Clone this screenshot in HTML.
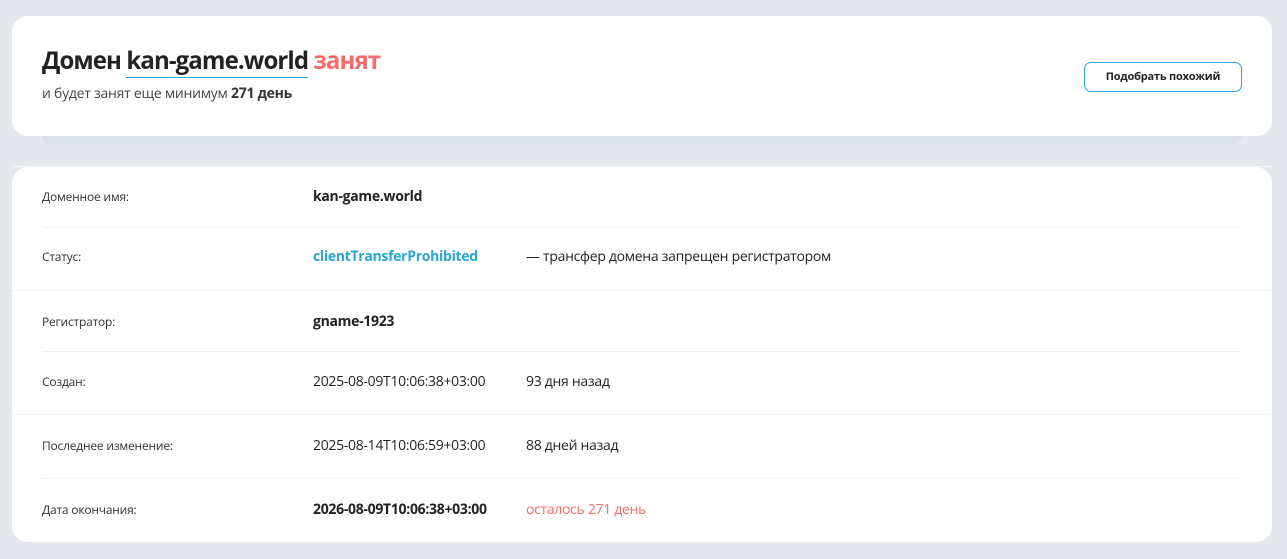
<!DOCTYPE html>
<html><head><meta charset="utf-8"><style>
*{margin:0;padding:0;box-sizing:border-box}
body{width:1287px;height:559px;background:#e5e9ed;font-family:"Open Sans","Liberation Sans","DejaVu Sans",sans-serif;color:#222;position:relative;overflow:hidden}
.card1{position:absolute;left:12px;top:16px;width:1260px;height:120px;background:#fff;border-radius:16px}
.strip{position:absolute;left:42px;top:130px;width:1200px;height:14px;background:#dce1e6;border-radius:0 0 8px 8px}
.line{position:absolute;left:12px;top:166px;width:1260px;height:1px;background:#f4f6f8}
h1{position:absolute;left:42px;top:44px;font-size:24px;font-weight:bold;letter-spacing:-0.9px;color:#222}
h1 u{text-decoration:none;border-bottom:1px solid #2aa7d8}
h1 span{color:#f76a6a}
.sub{position:absolute;left:42px;top:84px;font-size:14px;color:#444;letter-spacing:-0.25px}
.sub b{color:#333}
.btn{position:absolute;left:1084px;top:62px;width:158px;height:30px;border:1px solid #2aa7d8;border-radius:7px;font-size:11px;font-weight:bold;text-align:center;line-height:28px;color:#222;letter-spacing:-0.2px}
.card2{position:absolute;left:12px;top:167px;width:1260px;height:375px;background:#fff;border-radius:16px}
.row{position:absolute;left:0;width:1260px}
.row .l{position:absolute;left:30px;font-size:12px;color:#333;letter-spacing:-0.2px}
.row .v{position:absolute;left:301px;font-size:14px;color:#222;letter-spacing:-0.3px}
.row .e{position:absolute;left:514px;font-size:14px;color:#222;letter-spacing:-0.3px}
.sep{position:absolute;left:30px;width:1198px;height:1px;background:#eef0f2}
</style></head><body>
<div class="card1"></div>
<div class="strip"></div>
<div class="card1" style="background:#fff"></div>
<h1>Домен <u>kan-game.world</u> <span>занят</span></h1>
<div class="sub">и будет занят еще минимум <b>271 день</b></div>
<div class="btn">Подобрать похожий</div>
<div class="line"></div>
<div class="card2">
<div class="row" style="top:21px"><div class="l">Доменное имя:</div><div class="v" style="font-weight:bold;top:-1px">kan-game.world</div></div>
<div class="sep" style="top:60px"></div>
<div class="row" style="top:81px"><div class="l">Статус:</div><div class="v" style="font-weight:bold;color:#2aa7d8;top:-1px">clientTransferProhibited</div><div class="e" style="top:-1px">— трансфер домена запрещен регистратором</div></div>
<div class="sep" style="top:123px;left:0;width:1260px;background:#f2f4f6"></div>
<div class="row" style="top:146px"><div class="l">Регистратор:</div><div class="v" style="font-weight:bold;top:-1px">gname-1923</div></div>
<div class="sep" style="top:184px"></div>
<div class="row" style="top:206px"><div class="l">Создан:</div><div class="v" style="top:-1px">2025-08-09T10:06:38+03:00</div><div class="e" style="top:-1px">93 дня назад</div></div>
<div class="sep" style="top:247px;left:0;width:1260px;background:#f2f4f6"></div>
<div class="row" style="top:270px"><div class="l">Последнее изменение:</div><div class="v" style="top:-1px">2025-08-14T10:06:59+03:00</div><div class="e" style="top:-1px">88 дней назад</div></div>
<div class="sep" style="top:311px"></div>
<div class="row" style="top:334px"><div class="l">Дата окончания:</div><div class="v" style="font-weight:bold;top:-1px">2026-08-09T10:06:38+03:00</div><div class="e" style="color:#f76a6a;top:-1px">осталось 271 день</div></div>
</div>
</body></html>
